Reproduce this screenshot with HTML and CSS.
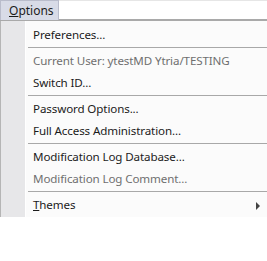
FILE: index.html
```html
<!DOCTYPE html>
<html lang="en">
<head>
  <meta charset="UTF-8">
  <title>Options</title>
  <link rel="stylesheet" href="styles.css">
</head>
<body>

  <div class="menubar">
    <div class="menu-title"><u>O</u>ptions</div>
  </div>

  <div class="dropdown">
    <div class="item">Preferences...</div>
    <div class="sep"></div>
    <div class="item disabled">Current User: ytestMD Ytria/TESTING</div>
    <div class="item">Switch ID...</div>
    <div class="sep"></div>
    <div class="item">Password Options...</div>
    <div class="item">Full Access Administration...</div>
    <div class="sep"></div>
    <div class="item">Modification Log Database...</div>
    <div class="item disabled">Modification Log Comment...</div>
    <div class="sep"></div>
    <div class="item submenu"><span><u>T</u>hemes</span><span class="arrow"></span></div>
  </div>

</body>
</html>
```

FILE: styles.css
```css
* {
  margin: 0;
  padding: 0;
  box-sizing: border-box;
}

body {
  font-family: 'Noto Sans', 'Open Sans', sans-serif;
  font-size: 11.6px;
  letter-spacing: -0.12px;
  color: #1b1b1b;
  background: #ffffff;
  width: 267px;
  height: 261px;
  overflow: hidden;
}

.menubar {
  height: 21px;
  border-top: 1px solid #e6e6e6;
  border-bottom: 2px solid #a9a9a9;
  display: flex;
}

.menu-title {
  width: 59px;
  height: 20px;
  margin-top: -1px;
  padding-left: 8px;
  line-height: 19px;
  font-size: 12px;
  letter-spacing: 0;
  background: #d8dbe7;
  border: 1px solid #b9bccb;
  border-bottom: none;
}

.dropdown {
  width: 267px;
  padding: 3px 0 1px;
  background: #fbfbfb;
  border-left: 1px solid #b5b5b5;
  background-image: linear-gradient(to right, #e7e7e9 24px, #ffffff 24px, #ffffff 25px, transparent 25px);
}

.item {
  height: 22px;
  line-height: 22px;
  padding-left: 32px;
  white-space: nowrap;
  overflow: hidden;
}

.item.disabled {
  color: #6f6f6f;
}

.item.submenu {
  display: flex;
  justify-content: space-between;
  padding-right: 7px;
}

.arrow {
  width: 0;
  height: 0;
  margin-top: 8px;
  border-top: 4px solid transparent;
  border-bottom: 4px solid transparent;
  border-left: 4px solid #444444;
}

.sep {
  height: 4px;
  margin-left: 27px;
  border-top: 1px solid transparent;
}

.sep::before {
  content: '';
  display: block;
  height: 1px;
  background: #a8a8a8;
}
```
